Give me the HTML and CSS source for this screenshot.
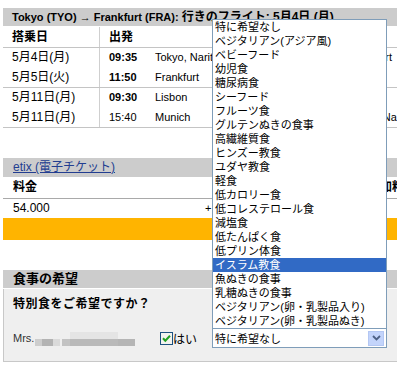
FILE: index.html
```html
<!DOCTYPE html>
<html>
<head>
    <title>フライト - 食事の希望</title>
    <meta charset="UTF-8">
    <link rel="stylesheet" href="styles.css">
</head>
<body>

<div class="page">
    <div class="bar route"><span class="latin">Tokyo (TYO) → Frankfurt (FRA): </span>行きのフライト: 5月4日 (月)</div>

    <div class="flights">
        <div class="row head">
            <div class="date">搭乗日</div><div class="time">出発</div><div class="city"></div><div class="city">到着</div>
        </div>
        <div class="group">
            <div class="row first">
                <div class="date">5月4日(月)</div><div class="time">09:35</div><div class="city">Tokyo, Narita</div><div class="city">Frankfurt</div>
            </div>
            <div class="row">
                <div class="date">5月5日(火)</div><div class="time">11:50</div><div class="city">Frankfurt</div><div class="city">Lisbon</div>
            </div>
        </div>
        <div class="group">
            <div class="row first">
                <div class="date">5月11日(月)</div><div class="time">09:30</div><div class="city">Lisbon</div><div class="city">Munich</div>
            </div>
            <div class="row">
                <div class="date">5月11日(月)</div><div class="time regular">15:40</div><div class="city">Munich</div><div class="city">Tokyo, Narita</div>
            </div>
        </div>
    </div>

    <div class="bar etix"><a href="#">etix (電子チケット)</a></div>

    <div class="fares">
        <div class="row head">
            <div>料金</div><div></div><div>追加料金</div>
        </div>
        <div class="row">
            <div>54.000</div><div class="plus">+ 12.760</div><div></div>
        </div>
    </div>
    <div class="notice"></div>

    <div class="bar meal-title">食事の希望</div>
    <div class="meal-box">
        <p class="question">特別食をご希望ですか？</p>
        <div class="passenger">
            <div class="name">
                Mrs.
                <span class="blur">
                    <span class="b1"></span><span class="b2"></span><span class="b3"></span>
                    <span class="b4"></span><span class="b5"></span><span class="b6"></span>
                </span>
            </div>
            <label class="yes">
                <svg class="check" width="13" height="13" viewBox="0 0 13 13">
                    <rect x="0.5" y="0.5" width="12" height="12" fill="#f3f3ef" stroke="#1c5180"/>
                    <path d="M3 6.3 L5.3 8.8 L10 3.8" fill="none" stroke="#21a121" stroke-width="2"/>
                </svg>はい
            </label>
            <div class="select">
                <ul class="options">
                    <li>特に希望なし</li>
                    <li>ベジタリアン(アジア風)</li>
                    <li>ベビーフード</li>
                    <li>幼児食</li>
                    <li>糖尿病食</li>
                    <li>シーフード</li>
                    <li>フルーツ食</li>
                    <li>グルテンぬきの食事</li>
                    <li>高繊維質食</li>
                    <li>ヒンズー教食</li>
                    <li>ユダヤ教食</li>
                    <li>軽食</li>
                    <li>低カロリー食</li>
                    <li>低コレステロール食</li>
                    <li>減塩食</li>
                    <li>低たんぱく食</li>
                    <li>低プリン体食</li>
                    <li class="selected">イスラム教食</li>
                    <li>魚ぬきの食事</li>
                    <li>乳糖ぬきの食事</li>
                    <li>ベジタリアン(卵・乳製品入り)</li>
                    <li>ベジタリアン(卵・乳製品ぬき)</li>
                </ul>
                <span class="value">特に希望なし</span>
                <span class="arrow">
                    <svg width="9" height="6" viewBox="0 0 9 6">
                        <path d="M1 1 L4.5 4.5 L8 1" fill="none" stroke="#4d6185" stroke-width="1.8"/>
                    </svg>
                </span>
            </div>
        </div>
    </div>
</div>

</body>
</html>
```

FILE: styles.css
```css
body{
    margin: 0;
    padding: 8px 0 0 3px;
    font-family: "Liberation Sans", "Noto Sans CJK JP", sans-serif;
    font-size: 11px;
    color: #000;
    background-color: #fff;
    overflow: hidden;
}

.page{
    width: 394px;
    overflow: hidden;
}

.bar{
    height: 18px;
    line-height: 18px;
    padding-left: 9px;
    background-color: #cccccc;
    font-weight: bold;
    font-size: 13px;
    white-space: nowrap;
}

.route{
    font-size: 12px;
}

.route .latin{
    font-size: 11px;
}

/* rows of the flight and fare lists */

.row{
    display: grid;
    box-sizing: border-box;
    white-space: nowrap;
}

.flights{
    margin-top: 1px;
}

.flights .row{
    grid-template-columns: 97px 52px 193px 52px;
    height: 20px;
    line-height: 20px;
}

.flights .row.first{
    height: 19px;
    line-height: 19px;
}

.flights .head{
    height: 21px;
    border-bottom: 1px solid #c4c4c4;
    font-size: 12px;
    font-weight: bold;
}

.flights .group{
    border-bottom: 1px solid #c4c4c4;
}

.flights .date{
    padding-left: 9px;
    border-right: 1px solid #cfcfcf;
    font-size: 12px;
}

.flights .time{
    padding-left: 9px;
    font-weight: bold;
}

.flights .time.regular{
    font-weight: normal;
}

.flights .city{
    padding-left: 3px;
}

/* fares */

.etix{
    margin-top: 30px;
    height: 19px;
    line-height: 19px;
    padding-left: 10px;
    font-weight: normal;
    font-size: 12px;
}

.etix a{
    color: #223d90;
    text-decoration: underline;
}

.fares .row{
    grid-template-columns: 192px 163px 39px;
    height: 19px;
    line-height: 19px;
    font-size: 12px;
    padding-left: 10px;
}

.fares .head{
    height: 22px;
    line-height: 21px;
    border-bottom: 1px solid #a9a9a9;
    font-weight: bold;
}

.fares .plus{
    font-size: 11px;
}

.notice{
    height: 22px;
    background-color: #ffb400;
}

/* meal request */

.meal-title{
    margin-top: 30px;
    padding-left: 10px;
}

.meal-box{
    margin-top: 1px;
    height: 72px;
    background-color: #efefef;
    border-left: 1px solid #c8c8c8;
    border-bottom: 1px solid #c8c8c8;
}

.question{
    margin: 0;
    padding: 8px 0 0 9px;
    font-size: 12px;
    font-weight: bold;
    letter-spacing: 0.5px;
    line-height: 14px;
}

.passenger{
    display: flex;
    align-items: center;
    height: 20px;
    margin-top: 17px;
    padding-left: 9px;
}

.name{
    flex: none;
    width: 147px;
    display: flex;
    align-items: center;
    font-size: 11px;
    color: #333;
}

.blur{
    display: flex;
    align-items: flex-end;
    height: 16px;
    margin-left: 1px;
}

.blur span{
    display: block;
    height: 7px;
}

.blur .b1{ width: 7px; background-color: #cdcdcd; }
.blur .b2{ width: 11px; background-color: #b3b3b3; }
.blur .b3{ width: 7px; background-color: #dadada; margin-right: 2px; }
.blur .b4{ width: 8px; background-color: #c3c3c3; }
.blur .b5{ width: 48px; background-color: #b9b9b9; box-shadow: 0 -7px 0 #e4e4e4; }
.blur .b6{ width: 17px; background-color: #b5b5b5; }

.yes{
    flex: none;
    width: 52px;
    display: flex;
    align-items: center;
    font-size: 12px;
}

.select{
    position: relative;
    flex: none;
    box-sizing: border-box;
    width: 175px;
    height: 20px;
    border: 1px solid #7f9db9;
    background-color: #fff;
    display: flex;
    align-items: center;
}

.value{
    flex: 1;
    padding-left: 2px;
    font-size: 11px;
}

.arrow{
    box-sizing: border-box;
    width: 16px;
    height: 15px;
    margin-right: 2px;
    border: 1px solid #b4c7f3;
    background-color: #c3d4fb;
    display: flex;
    align-items: center;
    justify-content: center;
}

.options{
    position: absolute;
    left: -1px;
    right: -1px;
    bottom: 100%;
    margin: 0;
    padding: 0;
    list-style: none;
    border: 1px solid #7f9db9;
    background-color: #fff;
    font-size: 11px;
    line-height: 14px;
}

.options li{
    height: 14px;
    padding-left: 2px;
    white-space: nowrap;
}

.options li.selected{
    background-color: #316ac5;
    color: #fff;
}
```
